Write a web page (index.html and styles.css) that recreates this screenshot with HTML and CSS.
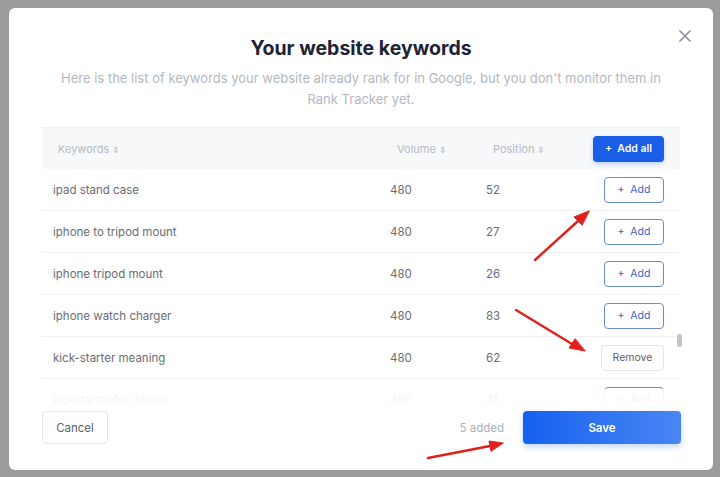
FILE: index.html
```html
<!DOCTYPE html>
<html lang="en">
<head>
    <meta charset="UTF-8" />
    <title>Your website keywords</title>
    <link rel="stylesheet" href="styles.css">
</head>
<body>
    <div class="modal">
        <button type="button" class="modal-close" aria-label="Close">
            <svg width="12" height="12" viewBox="0 0 12 12"><path d="M1 1 L11 11 M11 1 L1 11" stroke="#8a8f99" stroke-width="1.6" fill="none" stroke-linecap="round"/></svg>
        </button>

        <h1 class="modal-title">Your website keywords</h1>
        <p class="modal-desc">Here is the list of keywords your website already rank for in Google, but you don't monitor them in Rank Tracker yet.</p>

        <!-- 키워드 테이블 -->
        <div class="kw-table">
            <div class="kw-head">
                <span>Keywords <i class="sort">&#8661;</i></span>
                <span>Volume <i class="sort">&#8661;</i></span>
                <span>Position <i class="sort">&#8661;</i></span>
                <span class="cell-action"><button type="button" class="btn btn-primary btn-sm">+&nbsp; Add all</button></span>
            </div>
            <div class="kw-body">
                <div class="kw-row">
                    <span>ipad stand case</span><span>480</span><span>52</span>
                    <span class="cell-action"><button type="button" class="btn btn-add">+&nbsp; Add</button></span>
                </div>
                <div class="kw-row">
                    <span>iphone to tripod mount</span><span>480</span><span>27</span>
                    <span class="cell-action"><button type="button" class="btn btn-add">+&nbsp; Add</button></span>
                </div>
                <div class="kw-row">
                    <span>iphone tripod mount</span><span>480</span><span>26</span>
                    <span class="cell-action"><button type="button" class="btn btn-add">+&nbsp; Add</button></span>
                </div>
                <div class="kw-row">
                    <span>iphone watch charger</span><span>480</span><span>83</span>
                    <span class="cell-action"><button type="button" class="btn btn-add">+&nbsp; Add</button></span>
                </div>
                <div class="kw-row">
                    <span>kick-starter meaning</span><span>480</span><span>62</span>
                    <span class="cell-action"><button type="button" class="btn btn-remove">Remove</button></span>
                </div>
                <div class="kw-row">
                    <span>kickstarter for iphone</span><span>480</span><span>41</span>
                    <span class="cell-action"><button type="button" class="btn btn-add">+&nbsp; Add</button></span>
                </div>
            </div>
            <div class="kw-fade"></div>
            <div class="kw-scrollbar"></div>
        </div>

        <div class="modal-footer">
            <button type="button" class="btn btn-cancel">Cancel</button>
            <span class="added-count">5 added</span>
            <button type="button" class="btn btn-save">Save</button>
        </div>
    </div>

    <!-- 주석 화살표 -->
    <svg class="arrows" width="720" height="477" viewBox="0 0 720 477">
        <g stroke="#e0201c" stroke-width="2.4" stroke-linecap="round" fill="#e0201c">
            <line x1="535" y1="260" x2="578" y2="221"/>
            <polygon points="589,211 574,217 582,225" stroke-width="1"/>
            <line x1="516" y1="310" x2="572" y2="344"/>
            <polygon points="585,351 569,348 575,339" stroke-width="1"/>
            <line x1="428" y1="458" x2="490" y2="446"/>
            <polygon points="503,443 489,441 491,451" stroke-width="1"/>
        </g>
    </svg>
</body>
</html>
```

FILE: styles.css
```css
html, body {
    margin:0;
    height:100%;
}
body {
    background:#9c9c9c;
    padding:8px 7px 0 9px;
    box-sizing:border-box;
    font-family:"Inter", "Open Sans", sans-serif;
    color:#4f5461;
    position:relative;
}
.modal {
    position:relative;
    width:704px;
    height:462px;
    background:#fff;
    border-radius:6px;
    padding:27px 33px 0;
    box-sizing:border-box;
}
.modal-close {
    position:absolute;
    top:22px;
    right:22px;
    padding:0;
    border:none;
    background:none;
}
.modal-title {
    margin:0;
    font-size:19.5px;
    line-height:26px;
    font-weight:700;
    text-align:center;
    color:#1e2235;
}
.modal-desc {
    margin:7px auto 0;
    width:625px;
    font-size:13px;
    line-height:21px;
    text-align:center;
    color:#b5b8be;
}
.kw-table {
    position:relative;
    margin-top:17px;
    border-top:1px solid #eef0f3;
}
.kw-head, .kw-row {
    display:grid;
    align-items:center;
    height:41px;
}
.kw-head {
    grid-template-columns:339px 96px 1fr auto;
    padding:0 16px;
    background:#f7f8fa;
    font-size:11px;
    color:#b6bac2;
}
.sort {
    font-style:normal;
    font-size:9px;
}
.kw-body {
    height:237px;
    overflow:hidden;
}
.kw-row {
    grid-template-columns:337px 96px 1fr auto;
    padding:0 16px 0 11px;
    border-bottom:1px solid #eef0f3;
    font-size:11.5px;
    color:#686c75;
}
.cell-action {
    display:flex;
    justify-content:flex-end;
}
.kw-fade {
    position:absolute;
    left:0;
    right:0;
    bottom:0;
    height:17px;
    background:linear-gradient(rgba(255,255,255,0.88), rgba(255,255,255,0.97));
}
.kw-scrollbar {
    position:absolute;
    right:-2px;
    top:206px;
    width:5px;
    height:13px;
    border-radius:3px;
    background:#c2c4c8;
}
.btn {
    font-family:inherit;
    border-radius:4px;
    cursor:pointer;
    box-sizing:border-box;
}
.btn-primary {
    width:71px;
    height:26px;
    border:none;
    background:#1a5de6;
    color:#fff;
    font-size:10.5px;
    font-weight:600;
    box-shadow:0 2px 4px rgba(26,93,230,0.25);
}
.btn-add {
    width:60px;
    height:26px;
    border:1px solid #6b8ad4;
    background:#fff;
    color:#3b64c4;
    font-size:10.5px;
}
.btn-remove {
    width:63px;
    height:26px;
    border:1px solid #e3e5ea;
    background:#fff;
    color:#5c616c;
    font-size:10.5px;
}
.modal-footer {
    display:flex;
    align-items:center;
    padding-top:5px;
}
.btn-cancel {
    width:66px;
    height:33px;
    border:1px solid #e3e5ea;
    background:#fff;
    color:#5c616c;
    font-size:11.5px;
}
.added-count {
    margin-left:auto;
    margin-right:19px;
    font-size:11.5px;
    color:#a9afba;
}
.btn-save {
    width:158px;
    height:33px;
    margin-right:-1px;
    border:none;
    background:linear-gradient(90deg, #1561ef, #4a86f3);
    color:#fff;
    font-size:11.5px;
    font-weight:600;
    box-shadow:0 3px 6px rgba(21,97,239,0.25);
}
.arrows {
    position:absolute;
    left:0;
    top:0;
    pointer-events:none;
}
```
